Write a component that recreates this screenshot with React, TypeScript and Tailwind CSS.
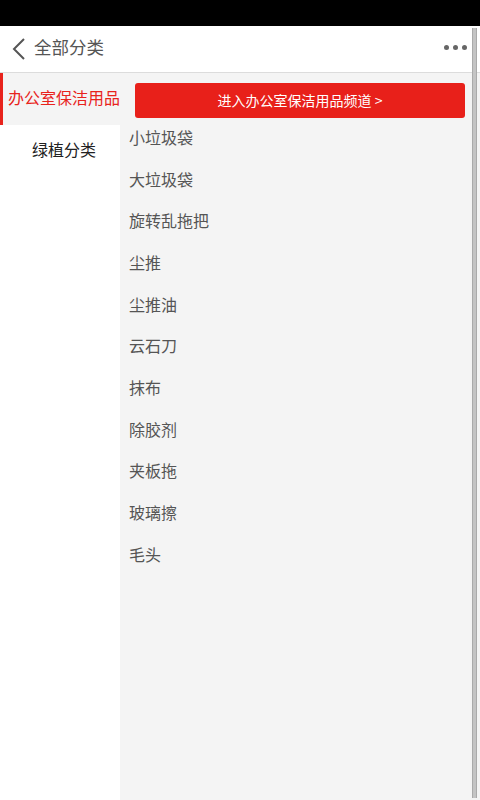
import React from "react";

const items = ["小垃圾袋", "大垃圾袋", "旋转乱拖把", "尘推", "尘推油", "云石刀", "抹布", "除胶剂", "夹板拖", "玻璃擦", "毛头"];

export default function App() {
  return (
    <div
      className="relative w-[480px] h-[800px] flex flex-col bg-white overflow-hidden"
      style={{ fontFamily: '"Noto Sans CJK SC", "Noto Sans", sans-serif' }}
    >
      <div className="h-[26px] bg-black shrink-0" />
      <div className="h-[47px] shrink-0 flex items-center border-b border-[#dcdcdc] bg-white">
        <svg width="16" height="24" viewBox="0 0 16 24" className="ml-[11px]">
          <path d="M13 2 L3 12 L13 22" fill="none" stroke="#555" strokeWidth="2" />
        </svg>
        <span className="ml-[7px] mb-[4px] text-[17.5px] leading-none text-[#555]">全部分类</span>
        <div className="ml-auto mr-[13px] mb-[3px] flex gap-[4px]">
          <span className="w-[5px] h-[5px] rounded-full bg-[#666]" />
          <span className="w-[5px] h-[5px] rounded-full bg-[#666]" />
          <span className="w-[5px] h-[5px] rounded-full bg-[#666]" />
        </div>
      </div>
      <div className="flex flex-1 min-h-0">
        <div className="w-[120px] shrink-0 bg-white">
          <div className="h-[52px] flex items-center justify-center pl-[8px] pb-[5px] bg-[#f4f4f4] shadow-[inset_3px_0_0_#e8231c] text-[16px] text-[#e8231c] whitespace-nowrap">
            办公室保洁用品
          </div>
          <div className="h-[52px] flex items-center justify-center pl-[8px] pb-[4px] text-[16px] text-[#222]">
            绿植分类
          </div>
        </div>
        <div className="flex-1 bg-[#f4f4f4] pt-[10px]">
          <div className="mx-[15px] h-[35px] rounded-[3px] bg-[#e8201a] flex items-center justify-center text-white text-[14px]">
            进入办公室保洁用品频道 &gt;
          </div>
          <div className="mt-[-2px]">
            {items.map((t) => (
              <div key={t} className="h-[41.7px] flex items-center pl-[9px] text-[16px] text-[#555]">
                {t}
              </div>
            ))}
          </div>
        </div>
      </div>
      <div className="absolute right-[3px] top-[28px] w-[5px] h-[770px] bg-[#c4c4c4] border-x border-[#aaa]" />
    </div>
  );
}
